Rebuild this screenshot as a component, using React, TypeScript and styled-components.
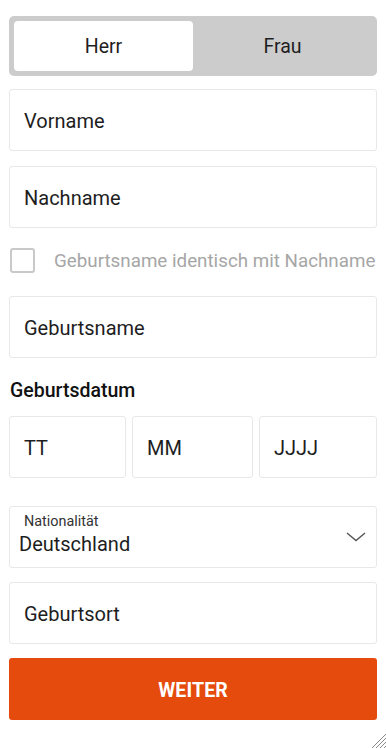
import React, { useState } from "react";
import styled, { createGlobalStyle } from "styled-components";

const Global = createGlobalStyle`
  html, body { margin: 0; padding: 0; background: #fff; }
  body { font-family: Roboto, "Noto Sans", Arial, sans-serif; color: #222; }
  * { box-sizing: border-box; }
`;

const Page = styled.div`
  position: relative;
  width: 386px;
  height: 748px;
  padding: 16px 9px 0 9px;
  display: flex;
  flex-direction: column;
`;

const Toggle = styled.div`
  display: grid;
  grid-template-columns: 1fr 1fr;
  height: 60px;
  background: #cccccc;
  border-radius: 5px;
  padding: 5px;
`;

const ToggleBtn = styled.div<{ $active?: boolean }>`
  display: flex;
  align-items: center;
  justify-content: center;
  background: ${(p) => (p.$active ? "#fff" : "transparent")};
  border-radius: 4px;
  font-size: 19.5px;
  color: #1e1e1e;
  cursor: pointer;
`;

const Field = styled.div<{ $mt: number }>`
  margin-top: ${(p) => p.$mt}px;
  height: 62px;
  border: 1px solid #e8e8e8;
  border-radius: 3px;
  display: flex;
  align-items: center;
  padding-left: 14px;
  padding-top: 1px;
  font-size: 20px;
  color: #1e1e1e;
  background: #fff;
`;

const CheckRow = styled.div`
  margin-top: 20px;
  height: 25px;
  display: flex;
  align-items: center;
  gap: 19px;
  padding-left: 1px;
`;

const Box = styled.div`
  flex: none;
  width: 25px;
  height: 25px;
  border: 2px solid #c9c9c9;
  border-radius: 3px;
`;

const CheckLabel = styled.span`
  font-size: 18.8px;
  color: #a6a6a6;
  white-space: nowrap;
`;

const Heading = styled.div`
  margin-top: 23px;
  padding-left: 1px;
  font-size: 19.5px;
  font-weight: 500;
  color: #111;
  line-height: 20px;
`;

const DateRow = styled.div`
  margin-top: 15px;
  display: grid;
  grid-template-columns: 117px 121px 118px;
  gap: 6px;
`;

const Select = styled.div`
  position: relative;
  margin-top: 28px;
  height: 62px;
  border: 1px solid #e8e8e8;
  border-radius: 3px;
  display: flex;
  flex-direction: column;
  justify-content: center;
  padding-left: 9px;
  padding-bottom: 4px;
`;

const SelectLabel = styled.div`
  font-size: 14.4px;
  color: #333;
  padding-left: 5px;
  line-height: 16px;
`;

const SelectValue = styled.div`
  font-size: 20px;
  color: #1e1e1e;
  line-height: 24px;
  margin-top: 2px;
`;

const Chevron = styled.svg`
  position: absolute;
  right: 10px;
  top: 25px;
`;

const Button = styled.div`
  margin-top: 14px;
  height: 62px;
  padding-top: 3px;
  background: #e64b0e;
  border-radius: 3px;
  display: flex;
  align-items: center;
  justify-content: center;
  color: #fff;
  font-weight: 700;
  font-size: 19.5px;
  letter-spacing: 0.1px;
`;

const Grip = styled.svg`
  position: absolute;
  right: 0;
  bottom: 0;
`;

export default function App() {
  const [sex, setSex] = useState("Herr");
  return (
    <>
      <Global />
      <Page>
        <Toggle>
          <ToggleBtn $active={sex === "Herr"} onClick={() => setSex("Herr")}>Herr</ToggleBtn>
          <ToggleBtn $active={sex === "Frau"} onClick={() => setSex("Frau")}>Frau</ToggleBtn>
        </Toggle>
        <Field $mt={13}>Vorname</Field>
        <Field $mt={15}>Nachname</Field>
        <CheckRow>
          <Box />
          <CheckLabel>Geburtsname identisch mit Nachname</CheckLabel>
        </CheckRow>
        <Field $mt={23}>Geburtsname</Field>
        <Heading>Geburtsdatum</Heading>
        <DateRow>
          <Field $mt={0}>TT</Field>
          <Field $mt={0}>MM</Field>
          <Field $mt={0}>JJJJ</Field>
        </DateRow>
        <Select>
          <SelectLabel>Nationalität</SelectLabel>
          <SelectValue>Deutschland</SelectValue>
          <Chevron width="20" height="10" viewBox="0 0 20 10">
            <path d="M1 1 L10 8.5 L19 1" fill="none" stroke="#555" strokeWidth="1.4" />
          </Chevron>
        </Select>
        <Field $mt={14}>Geburtsort</Field>
        <Button>WEITER</Button>
        <Grip width="16" height="16" viewBox="0 0 16 16">
          <path d="M16 2 L2 16 M16 6 L6 16 M16 10 L10 16 M16 14 L14 16" stroke="#8a8a8a" strokeWidth="1" />
        </Grip>
      </Page>
    </>
  );
}
